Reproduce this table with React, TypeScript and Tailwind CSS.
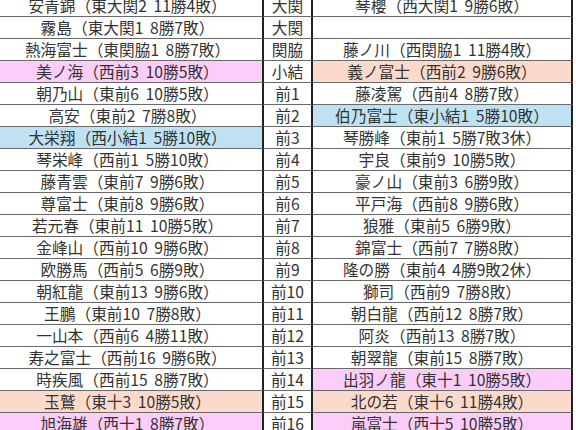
const rows: [string, string, string, string, string][] = [
  ["安青錦（東大関2 11勝4敗）", "大関", "琴櫻（西大関1 9勝6敗）", "", ""],
  ["霧島（東大関1 8勝7敗）", "大関", "", "", ""],
  ["熱海富士（東関脇1 8勝7敗）", "関脇", "藤ノ川（西関脇1 11勝4敗）", "", ""],
  ["美ノ海（西前3 10勝5敗）", "小結", "義ノ富士（西前2 9勝6敗）", "pink", "peach"],
  ["朝乃山（東前6 10勝5敗）", "前1", "藤凌駕（西前4 8勝7敗）", "", ""],
  ["高安（東前2 7勝8敗）", "前2", "伯乃富士（東小結1 5勝10敗）", "", "blue"],
  ["大栄翔（西小結1 5勝10敗）", "前3", "琴勝峰（東前1 5勝7敗3休）", "blue", ""],
  ["琴栄峰（西前1 5勝10敗）", "前4", "宇良（東前9 10勝5敗）", "", ""],
  ["藤青雲（東前7 9勝6敗）", "前5", "豪ノ山（東前3 6勝9敗）", "", ""],
  ["尊富士（東前8 9勝6敗）", "前6", "平戸海（西前8 9勝6敗）", "", ""],
  ["若元春（東前11 10勝5敗）", "前7", "狼雅（東前5 6勝9敗）", "", ""],
  ["金峰山（西前10 9勝6敗）", "前8", "錦富士（西前7 7勝8敗）", "", ""],
  ["欧勝馬（西前5 6勝9敗）", "前9", "隆の勝（東前4 4勝9敗2休）", "", ""],
  ["朝紅龍（東前13 9勝6敗）", "前10", "獅司（西前9 7勝8敗）", "", ""],
  ["王鵬（東前10 7勝8敗）", "前11", "朝白龍（西前12 8勝7敗）", "", ""],
  ["一山本（西前6 4勝11敗）", "前12", "阿炎（西前13 8勝7敗）", "", ""],
  ["寿之富士（西前16 9勝6敗）", "前13", "朝翠龍（東前15 8勝7敗）", "", ""],
  ["時疾風（西前15 8勝7敗）", "前14", "出羽ノ龍（東十1 10勝5敗）", "", "pink"],
  ["玉鷲（東十3 10勝5敗）", "前15", "北の若（東十6 11勝4敗）", "peach", "peach"],
  ["旭海雄（西十1 8勝7敗）", "前16", "嵐富士（西十5 10勝5敗）", "pink", "pink"],
];

const fills: Record<string, string> = {
  "": "bg-white",
  pink: "bg-[#fbcdf8]",
  peach: "bg-[#fbdacb]",
  blue: "bg-[#bfe2f2]",
};

const cell =
  "flex items-center justify-center border-b border-b-[#6a6a6a] border-r-2 border-r-[#222] whitespace-nowrap";

export default function App() {
  return (
    <div
      className="w-[576px] h-[430px] overflow-hidden bg-white text-[#333] text-[15.7px] leading-none [word-spacing:3px]"
      style={{ fontFamily: '"Noto Sans CJK JP", "Noto Sans", sans-serif' }}
    >
      <div className="-mt-[5px] -ml-[7px] grid grid-cols-[271px_49px_260px]">
        {rows.map(([left, rank, right, lc, rc], i) => (
          <div key={i} className="contents">
            <div className={`${cell} h-[22px] ${fills[lc]}`}>{left}</div>
            <div className={`${cell} h-[22px] bg-white`}>{rank}</div>
            <div className={`${cell} h-[22px] ${fills[rc]}`}>{right}</div>
          </div>
        ))}
      </div>
    </div>
  );
}
